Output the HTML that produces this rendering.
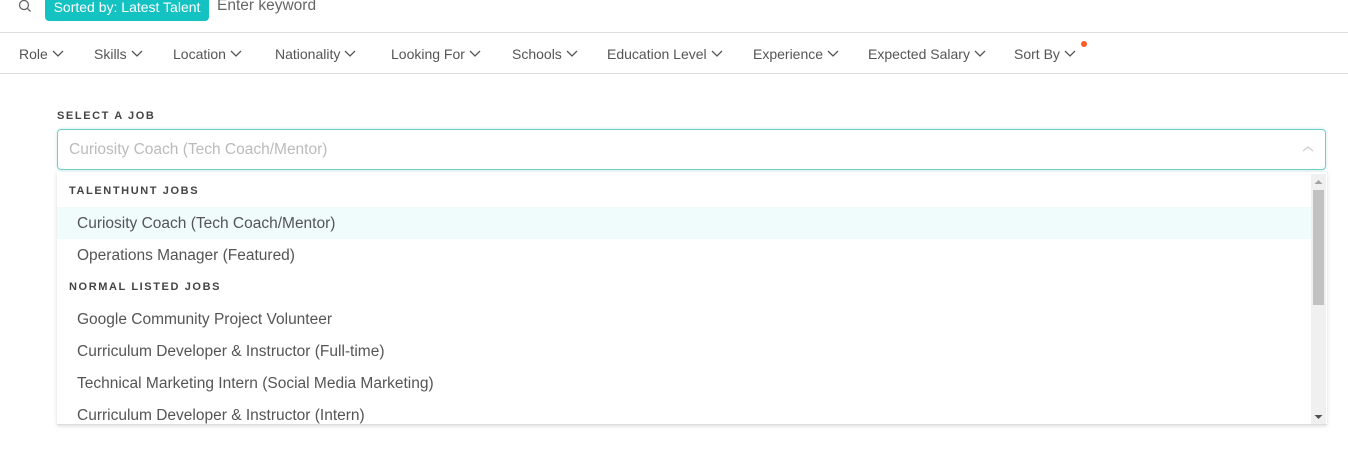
<!DOCTYPE html>
<html><head><meta charset="utf-8"><style>
*{margin:0;padding:0;box-sizing:border-box}
body{width:1348px;height:454px;background:#fff;font-family:"Liberation Sans",sans-serif;color:#555;position:relative;overflow:hidden}
.a{position:absolute;white-space:nowrap}
.f{top:46px;font-size:14px;color:#555}
.f svg{margin-left:4px;vertical-align:1px}
.h{font-size:11px;font-weight:bold;letter-spacing:1.6px;color:#444}
.it{font-size:15.5px;color:#555;left:77px}
</style></head><body>
<svg class="a" style="left:18px;top:0" width="14" height="13" viewBox="0 0 14 13"><circle cx="6" cy="5" r="4.5" fill="none" stroke="#666" stroke-width="1.3"/><line x1="9.3" y1="8.3" x2="12.5" y2="11.5" stroke="#666" stroke-width="1.3"/></svg>
<div class="a" style="left:45px;top:-4px;width:164px;height:25px;background:#14c2c2;border-radius:4px;color:#fff;font-size:14px;line-height:22px;text-align:center">Sorted by: Latest Talent</div>
<div class="a" style="left:217px;top:-3px;font-size:15.5px;color:#666">Enter keyword</div>
<div class="a" style="left:0;top:32px;width:1348px;height:1px;background:#ddd"></div>
<div class="a" style="left:0;top:73px;width:1348px;height:1px;background:#ddd"></div>
<div class="a f" style="left:19px">Role<svg width="12" height="8"><path d="M1 1l5 5 5-5" fill="none" stroke="#555" stroke-width="1.3"/></svg></div>
<div class="a f" style="left:94px">Skills<svg width="12" height="8"><path d="M1 1l5 5 5-5" fill="none" stroke="#555" stroke-width="1.3"/></svg></div>
<div class="a f" style="left:173px">Location<svg width="12" height="8"><path d="M1 1l5 5 5-5" fill="none" stroke="#555" stroke-width="1.3"/></svg></div>
<div class="a f" style="left:275px">Nationality<svg width="12" height="8"><path d="M1 1l5 5 5-5" fill="none" stroke="#555" stroke-width="1.3"/></svg></div>
<div class="a f" style="left:391px">Looking For<svg width="12" height="8"><path d="M1 1l5 5 5-5" fill="none" stroke="#555" stroke-width="1.3"/></svg></div>
<div class="a f" style="left:512px">Schools<svg width="12" height="8"><path d="M1 1l5 5 5-5" fill="none" stroke="#555" stroke-width="1.3"/></svg></div>
<div class="a f" style="left:607px">Education Level<svg width="12" height="8"><path d="M1 1l5 5 5-5" fill="none" stroke="#555" stroke-width="1.3"/></svg></div>
<div class="a f" style="left:753px">Experience<svg width="12" height="8"><path d="M1 1l5 5 5-5" fill="none" stroke="#555" stroke-width="1.3"/></svg></div>
<div class="a f" style="left:868px">Expected Salary<svg width="12" height="8"><path d="M1 1l5 5 5-5" fill="none" stroke="#555" stroke-width="1.3"/></svg></div>
<div class="a f" style="left:1014px">Sort By<svg width="12" height="8"><path d="M1 1l5 5 5-5" fill="none" stroke="#555" stroke-width="1.3"/></svg></div>
<div class="a" style="left:1081px;top:41px;width:6px;height:6px;border-radius:3px;background:#ff5a1f"></div>
<div class="a h" style="left:57px;top:110px">SELECT A JOB</div>
<div class="a" style="left:57px;top:129px;width:1269px;height:41px;border:1px solid #70cfcb;border-radius:4px;box-shadow:0 0 3px #bfeae8"></div>
<div class="a" style="left:69px;top:141px;font-size:15.5px;color:#bbb">Curiosity Coach (Tech Coach/Mentor)</div>
<svg class="a" style="left:1302px;top:145px" width="12" height="8"><path d="M1 6l5-4 5 4" fill="none" stroke="#ccc" stroke-width="1.2"/></svg>
<div class="a" style="left:57px;top:172px;width:1270px;height:253px;background:#fff;box-shadow:0 1px 4px rgba(0,0,0,.15);border-bottom:1px solid #ddd"></div>
<div class="a" style="left:57px;top:207px;width:1254px;height:32px;background:#f0fcfc"></div>
<div class="a h" style="left:69px;top:185px">TALENTHUNT JOBS</div>
<div class="a it" style="top:215px">Curiosity Coach (Tech Coach/Mentor)</div>
<div class="a it" style="top:247px">Operations Manager (Featured)</div>
<div class="a h" style="left:69px;top:281px">NORMAL LISTED JOBS</div>
<div class="a it" style="top:311px">Google Community Project Volunteer</div>
<div class="a it" style="top:343px">Curriculum Developer &amp; Instructor (Full-time)</div>
<div class="a it" style="top:375px">Technical Marketing Intern (Social Media Marketing)</div>
<div class="a it" style="top:407px">Curriculum Developer &amp; Instructor (Intern)</div>
<div class="a" style="left:1311px;top:174px;width:15px;height:250px;background:#f0f0f0"></div>
<div class="a" style="left:1313px;top:190px;width:11px;height:115px;background:#c1c1c1"></div>
<svg class="a" style="left:1314px;top:179px" width="9" height="6"><path d="M0.5 5L4.5 1 8.5 5z" fill="#a3a3a3"/></svg>
<svg class="a" style="left:1314px;top:414px" width="9" height="6"><path d="M0.5 1L4.5 5 8.5 1z" fill="#505050"/></svg>
</body></html>
